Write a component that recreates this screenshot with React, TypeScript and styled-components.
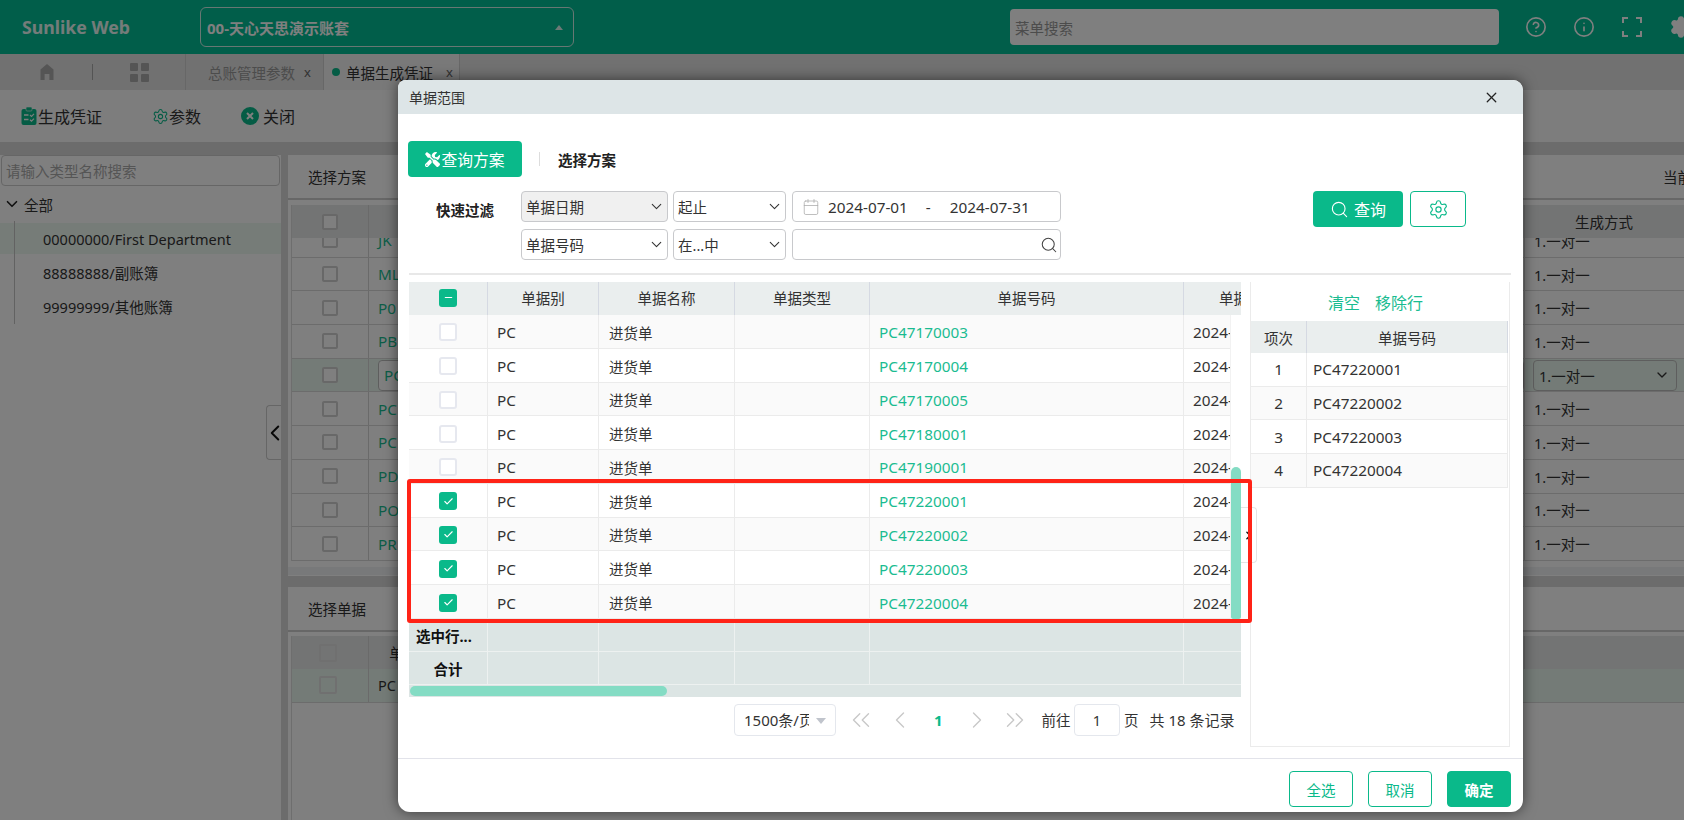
import React from "react";
import styled, { createGlobalStyle } from "styled-components";
import { ChevronDown, ChevronLeft, ChevronRight, ChevronsLeft, ChevronsRight, Search, Settings, X, CircleHelp, Info, Calendar, Check, Minus } from "lucide-react";
import { FaTools } from "react-icons/fa";

const FONT = `"Noto Sans", "Noto Sans CJK SC", sans-serif`;
const ACCENT = "#0ab98a";
const LINK = "#1abc91";

const Global = createGlobalStyle`
  html, body { margin: 0; padding: 0; background: #fff; overflow: hidden; }
  * { box-sizing: border-box; }
  body { font-family: ${FONT}; font-size: 14.5px; color: #333; }
`;

const Stage = styled.div`position: relative; width: 1684px; height: 820px; overflow: hidden;`;
const Page = styled.div`display: flex; flex-direction: column; width: 100%; height: 100%; background: #fff;`;

const TopBar = styled.header`display: flex; align-items: center; height: 54px; background: #02bd95; color: #fff; flex: none; overflow: hidden;`;
const Logo = styled.div`font-weight: 700; font-size: 17.7px; margin-left: 22px; width: 178px; flex: none; color: #e9f8f4;`;
const AccountSelect = styled.div`
  display: flex; align-items: center; justify-content: space-between; width: 374px; flex: none; height: 40px;
  border: 1px solid #cfeee6; border-radius: 6px; padding: 0 10px 0 6px; font-weight: 700; font-size: 15px;
`;
const Caret = styled.span`width: 0; height: 0; border-left: 4px solid transparent; border-right: 4px solid transparent; border-bottom: 5px solid #d9f2ec;`;
const MenuSearch = styled.div`
  margin-left: 436px; width: 489px; flex: none; height: 36px; background: #fff; border-radius: 4px; color: #999; display: flex; align-items: center; padding-left: 5px; font-size: 14.5px;
`;
const HeadIcons = styled.div`display: flex; align-items: center; margin-left: 26px; gap: 26px; color: #fff; flex: none;`;

const TabBar = styled.nav`display: flex; height: 36px; background: #e2e2e2; flex: none; align-items: stretch;`;
const HomeCell = styled.div`width: 92px; display: flex; align-items: center; justify-content: center; color: #aaa; padding-left: 2px;`;
const VRuleCell = styled.div`width: 1px; height: 16px; align-self: center; background: #a8a8a8;`;
const GridCell = styled.div`width: 92px; display: flex; align-items: center; justify-content: center; color: #aaa;`;
const Tab = styled.div<{ $w: number; $active?: boolean }>`
  width: ${(p) => p.$w}px; display: flex; align-items: center; gap: ${(p) => (p.$active ? "8px" : "4px")}; padding-left: ${(p) => (p.$active ? "6px" : "22px")};
  border-left: 1px solid #cfcfcf; border-right: ${(p) => (p.$active ? "1px solid #cfcfcf" : "0")};
  background: ${(p) => (p.$active ? "#f3f3f3" : "#e2e2e2")}; color: ${(p) => (p.$active ? "#333" : "#999")}; font-size: 14.5px;
`;
const TabDot = styled.span`width: 8px; height: 8px; border-radius: 50%; background: ${ACCENT}; margin-left: 2px; margin-right: -2px;`;
const TabClose = styled.span`font-size: 13px; color: #666; margin-left: 5px;`;

const Toolbar = styled.div`display: flex; align-items: center; height: 52px; background: #fafafa; flex: none; padding-left: 21px; font-size: 16px; color: #333;`;
const ToolBtn = styled.div<{ $ml?: number; $gap?: number }>`display: flex; align-items: center; gap: ${(p) => p.$gap ?? 1}px; margin-left: ${(p) => p.$ml ?? 0}px;`;
const Gap = styled.div`height: 13px; background: #d8d8d8; flex: none;`;

const Main = styled.main`flex: 1; display: flex; min-height: 0; background: #fff;`;
const LeftPane = styled.aside`width: 281px; flex: none; padding: 0 0 0 1px; position: relative;`;
const TreeSearch = styled.div`
  height: 31px; width: 279px; border: 1px solid #ccc; border-radius: 4px; color: #aaa; display: flex; align-items: center; padding-left: 4px; font-size: 14.5px;
`;
const TreeRoot = styled.div`display: flex; align-items: center; height: 36px; padding-left: 2px; gap: 3px; color: #333;`;
const TreeList = styled.div`margin: 1px 0 0 -1px;`;
const TreeItem = styled.div<{ $sel?: boolean }>`
  height: 31px; margin-bottom: 3px; display: flex; align-items: center; padding-left: 43px; position: relative;
  background: ${(p) => (p.$sel ? "#edf8f0" : "transparent")};
  &::before { content: ""; position: absolute; left: 14px; top: -2px; bottom: -2px; width: 1px; background: #c4c4c4; }
`;
const Collapse = styled.div`
  position: absolute; right: 0; top: 250px; width: 15px; height: 55px; border: 1px solid #ccc; border-right: 0; border-radius: 4px 0 0 4px; background: #fff;
  display: flex; align-items: center; justify-content: center; color: #111;
  svg { flex: none; margin-left: 1px; }
`;
const Splitter = styled.div`width: 7px; flex: none; background: #d8d8d8;`;
const RightPane = styled.section`flex: 1; min-width: 0; display: flex; flex-direction: column;`;
const Upper = styled.div`height: 421px; flex: none; display: flex; flex-direction: column; overflow: hidden; background: #fff;`;
const PaneHead = styled.div`height: 45px; flex: none; border-bottom: 2px solid #cfcfcf; display: flex; align-items: center; justify-content: space-between; padding-left: 20px; color: #333; white-space: nowrap; overflow: hidden;`;
const PaneHeadRight = styled.span`width: 21px; overflow: hidden; flex: none;`;
const BgTable = styled.div`margin: 5px 0 0 3px; flex: none; border-left: 1px solid #dcdcdc;`;
const BgScroll = styled.div`height: 323px; overflow: hidden;`;
const BgOffset = styled.div`margin-top: -14px;`;
const BgRow = styled.div<{ $head?: boolean; $sel?: boolean }>`
  display: grid; grid-template-columns: 77px 1156px 158px 1fr; height: ${(p) => (p.$head ? "33px" : "33.7px")};
  background: ${(p) => (p.$head ? "#e7e8e8" : p.$sel ? "#e9f7ee" : "#fff")};
  border-bottom: ${(p) => (p.$head ? "0" : "1px solid #d9d9d9")}; align-items: center;
`;
const BgCell = styled.div<{ $center?: boolean; $line?: boolean; $link?: boolean }>`
  display: flex; align-items: center; height: 100%; padding-left: ${(p) => (p.$center ? "0" : "9px")};
  justify-content: ${(p) => (p.$center ? "center" : "flex-start")};
  border-right: ${(p) => (p.$line ? "1px solid #d4d4d4" : "0")};
  color: ${(p) => (p.$link ? LINK : "#333")}; white-space: nowrap; overflow: hidden; font-size: ${(p) => (p.$link ? "15.3px" : "14.5px")};
`;
const BgCheck = styled.span<{ $soft?: boolean }>`
  width: ${(p) => (p.$soft ? 18 : 16)}px; height: ${(p) => (p.$soft ? 18 : 16)}px; border-radius: 2px; border: 2px solid ${(p) => (p.$soft ? "#e0e0e0" : "#d0d0d0")}; background: ${(p) => (p.$soft ? "transparent" : "#fff")};
  margin-right: ${(p) => (p.$soft ? 5 : 0)}px;
`;
const BgSelect = styled.div`
  width: 144px; height: 31px; border: 1px solid #bdbdbd; border-radius: 4px; display: flex; align-items: center; justify-content: space-between; padding: 0 6px 0 5px; margin-left: -1px; color: #333;
`;
const BgInput = styled.div`width: 100%; height: 31px; border: 1px solid #bdbdbd; border-radius: 4px; display: flex; align-items: center; padding-left: 5px; color: ${LINK}; background: #fff;`;
const BgHScroll = styled.div`height: 8px; margin-top: 6px; background: #f0f2f4;`;
const SplitterH = styled.div`height: 11px; background: #d8d8d8; flex: none;`;
const Lower = styled.div`flex: 1; display: flex; flex-direction: column; min-height: 0;`;
const LowerBody = styled.div`flex: 1; margin: 4px 0 0 3px; border-left: 1px solid #dcdcdc;`;

const Overlay = styled.div`position: absolute; inset: 0; background: rgba(0, 0, 0, 0.5);`;

const Modal = styled.div`
  position: absolute; left: 398px; top: 80px; width: 1125px; height: 732px; background: #fff; border-radius: 8px 10px 12px 12px;
  box-shadow: 0 0 14px rgba(0, 0, 0, 0.55); display: flex; flex-direction: column; overflow: hidden; font-family: ${FONT};
`;
const ModalTitle = styled.div`height: 34px; flex: none; background: #dde5e7; display: flex; align-items: center; justify-content: space-between; padding: 0 23px 0 11px; font-size: 14px; color: #333;`;
const ModalBody = styled.div`flex: 1; min-height: 0; display: flex; flex-direction: column; padding: 27px 12px 0 11px;`;
const PlanRow = styled.div`display: flex; align-items: center; height: 36px; flex: none; margin-left: -1px;`;
const PlanBtn = styled.div`width: 114px; height: 36px; border-radius: 4px; background: ${ACCENT}; color: #fff; display: flex; align-items: center; justify-content: center; font-size: 15.8px; gap: 1px;`;
const PlanDivider = styled.span`width: 1px; height: 14px; background: #ddd; margin: 0 17px;`;
const PlanLabel = styled.span`font-weight: 700; font-size: 14.5px; color: #222; margin-left: 1px;`;
const FilterRow = styled.div`display: grid; grid-template-columns: 112px 147px 5px 113px 6px 269px 252px 90px 7px 56px; margin-top: 14px; height: 69px; flex: none;`;
const FilterLabel = styled.div`grid-column: 1; grid-row: 1 / span 2; font-weight: 700; font-size: 14.5px; color: #222; padding: 8px 0 0 27px; white-space: nowrap;`;
const FieldStack = styled.div<{ $col: number }>`
  grid-column: ${(p) => p.$col}; grid-row: 1 / span 2; display: flex; flex-direction: column; gap: 7px;
`;
const Field = styled.div<{ $gray?: boolean }>`
  height: 31px; border: 1px solid #c8c9cc; border-radius: 4px; background: ${(p) => (p.$gray ? "#f0f0f0" : "#fff")};
  display: flex; align-items: center; justify-content: space-between; padding: 0 2px 0 4px; color: #333; font-size: 14.5px; white-space: nowrap;
`;
const DateValue = styled.span`flex: 1; display: flex; align-items: center; padding-left: 5px; gap: 8px; color: #333; font-size: 15.3px;`;
const Dash = styled.span`margin: 0 19px 0 18px;`;
const QueryBtn = styled.div`grid-column: 8; grid-row: 1 / span 2; height: 36px; border-radius: 4px; background: ${ACCENT}; color: #fff; display: flex; align-items: center; justify-content: center; gap: 5px; font-size: 16px;`;
const GearBtn = styled.div`grid-column: 10; grid-row: 1 / span 2; height: 36px; border-radius: 4px; border: 1px solid ${ACCENT}; color: ${ACCENT}; display: flex; align-items: center; justify-content: center;`;
const Rule = styled.div`height: 2px; background: #e8e8e8; margin-top: 13px; flex: none;`;

const COLS = "79px 111px 136px 135px 314px";
const Split = styled.div`display: grid; grid-template-columns: 832px 260px; column-gap: 9px; margin-top: 7px; height: 465px; flex: none;`;
const TableWrap = styled.div`display: flex; flex-direction: column; min-width: 0;`;
const GridShell = styled.div`position: relative; width: 832px; overflow: hidden;`;
const RowGrid = styled.div<{ $bg: string; $h: number; $line?: string }>`
  display: grid; grid-template-columns: ${COLS} 57px; height: ${(p) => p.$h}px; background: ${(p) => p.$bg}; width: 821px; overflow: hidden;
  border-bottom: 1.5px solid ${(p) => p.$line ?? "#ebebeb"};
`;
const HeadGrid = styled(RowGrid)`width: 832px; border-bottom: 0; grid-template-columns: ${COLS} 1fr;`;
const FootGrid = styled(RowGrid)`width: 832px; grid-template-columns: ${COLS} 1fr;`;
const Td = styled.div<{ $pad?: number; $center?: boolean; $link?: boolean; $head?: boolean; $bold?: boolean; $line?: string; $latin?: boolean; $last?: boolean }>`
  display: flex; align-items: center; height: 100%; white-space: nowrap; overflow: hidden; font-size: ${(p) => (p.$latin ? "15.3px" : "14.5px")};
  justify-content: ${(p) => (p.$center ? "center" : "flex-start")}; padding-left: ${(p) => p.$pad ?? 0}px;
  padding-top: ${(p) => (p.$head ? 0 : 2)}px; padding-bottom: ${(p) => (p.$head ? 2 : 0)}px;
  color: ${(p) => (p.$link ? LINK : p.$bold ? "#111" : "#333")}; font-weight: ${(p) => (p.$bold ? 700 : 400)};
  border-right: ${(p) => (p.$last ? "0" : p.$head ? "1.5px solid #d5d9e2" : `1.5px solid ${p.$line ?? "#ebebeb"}`)};
`;
const Box = styled.span<{ $on?: boolean }>`
  width: 18px; height: 18px; border-radius: 3px; flex: none; display: flex; align-items: center; justify-content: center; color: #fff;
  background: ${(p) => (p.$on ? ACCENT : "#fff")}; border: ${(p) => (p.$on ? "0" : "2px solid #e6e8ef")};
`;
const VTrack = styled.div`position: absolute; right: 0; top: 33px; bottom: 66px; width: 11px; background: #fff; border-left: 1px solid #f2f2f2;`;
const VThumb = styled.div`position: absolute; left: 0; right: 0; top: 152px; bottom: 0; background: #84dcc4; border-radius: 5px 5px 2px 2px;`;
const HTrack = styled.div`height: 12px; padding-top: 1px; background: #dce5e4; width: 832px; position: relative; flex: none; display: flex;`;
const HThumb = styled.div`width: 257px; height: 10px; margin: 0 0 0 1px; background: #84dcc4; border-radius: 5px;`;
const FootBand = styled.div`background: #dce5e4; width: 832px;`;
const Pager = styled.div`display: flex; align-items: center; height: 32px; margin: 7px 0 0 325px; font-size: 14.5px; color: #333;`;
const PageSize = styled.div`width: 102px; height: 32px; flex: none; border: 1px solid #e4e7ed; border-radius: 4px; display: flex; align-items: center; padding-left: 9px; overflow: hidden; white-space: nowrap; position: relative; font-size: 15px;`;
const SizeCaret = styled.span`position: absolute; right: 9px; top: 13px; width: 0; height: 0; border-left: 5.5px solid transparent; border-right: 5.5px solid transparent; border-top: 6px solid #c0c4cc;`;
const SizeText = styled.span`width: 65px; overflow: hidden; display: block; flex: none;`;
const PagerCells = styled.div`display: grid; grid-template-columns: repeat(5, 38.5px); margin-left: 6px; flex: none;`;
const PagerIcon = styled.span`color: #c8c8c8; display: flex; align-items: center; justify-content: center; height: 32px; svg { flex: none; }`;
const PageNum = styled.span`color: ${ACCENT}; font-weight: 700; text-align: center; line-height: 32px; font-size: 15px;`;
const PagerText = styled.span<{ $ml: number; $size?: number }>`margin-left: ${(p) => p.$ml}px; white-space: nowrap; flex: none; font-size: ${(p) => p.$size ?? 14.5}px;`;
const PageInput = styled.div`width: 46px; height: 32px; flex: none; border: 1px solid #e4e7ed; border-radius: 4px; display: flex; align-items: center; justify-content: center; margin-left: 3.5px;`;

const SidePanel = styled.div`border: 1px solid #ebebeb; border-top: 0; display: flex; flex-direction: column; position: relative; margin-left: 0;`;
const SideActions = styled.div`height: 39px; flex: none; display: flex; align-items: center; justify-content: center; gap: 15px; color: ${LINK}; font-size: 16px; padding-right: 9px;`;
const SideRow = styled.div<{ $bg: string; $head?: boolean }>`
  display: grid; grid-template-columns: 56px 1fr; height: ${(p) => (p.$head ? "32px" : "33.7px")}; background: ${(p) => p.$bg};
  border-bottom: ${(p) => (p.$head ? "0" : "1.5px solid #ebebeb")}; width: 257px;
`;
const SideCell = styled.div<{ $center?: boolean; $head?: boolean; $latin?: boolean }>`
  display: flex; align-items: center; justify-content: ${(p) => (p.$center ? "center" : "flex-start")}; padding-left: ${(p) => (p.$center ? 0 : 6)}px;
  border-right: ${(p) => (p.$head ? "1.5px solid #d5d9e2" : "1.5px solid #ebebeb")}; color: #333; font-size: ${(p) => (p.$latin ? "15.3px" : "14.5px")};
`;
const ModalFoot = styled.div`height: 54px; flex: none; border-top: 1.5px solid #e2e3ea; margin-top: 11px; display: flex; justify-content: flex-end; align-items: flex-start; padding: 12px 12px 0 0; gap: 15px;`;
const FootBtn = styled.div<{ $solid?: boolean }>`
  width: 64px; height: 36px; border-radius: 4px; display: flex; align-items: center; justify-content: center; font-size: 14.5px;
  border: 1px solid ${ACCENT}; background: ${(p) => (p.$solid ? ACCENT : "#fff")}; color: ${(p) => (p.$solid ? "#fff" : ACCENT)}; font-weight: ${(p) => (p.$solid ? 700 : 400)};
`;
const RedMark = styled.div`position: absolute; left: 407px; top: 479px; width: 845px; height: 144px; border: 4px solid #ff2317; border-radius: 3px;`;
const HandleFloat = styled.div`position: absolute; left: 1241px; top: 507px; width: 16px; height: 56px; border: 1px solid #e4e4e4; border-left: 0; border-radius: 0 4px 4px 0; background: #fff; display: flex; align-items: center; justify-content: center; color: #111;`;

const HomeIcon = () => (
  <svg width="18" height="18" viewBox="0 0 18 18" fill="currentColor"><path d="M9 1 15.5 6.6V17H11.4V11H6.6V17H2.5V6.6Z" /></svg>
);
const GridIcon = () => (
  <svg width="19" height="19" viewBox="0 0 19 19" fill="currentColor"><rect x="0" y="0" width="8" height="8" rx="1" /><rect x="11" y="0" width="8" height="8" rx="1" /><rect x="0" y="11" width="8" height="8" rx="1" /><rect x="11" y="11" width="8" height="8" rx="1" /></svg>
);
const FullIcon = ({ size = 22 }: { size?: number }) => (
  <svg width={size} height={size} viewBox="0 0 22 22" fill="none" stroke="currentColor" strokeWidth="2"><path d="M2 7V2H7M15 2H20V7M2 15V20H7M15 20H20V15" /></svg>
);
const VoucherIcon = () => (
  <svg width="16" height="18" viewBox="0 0 16 18">
    <rect x="0.5" y="2" width="15" height="16" rx="2" fill={ACCENT} />
    <rect x="5" y="0" width="6" height="4" rx="1" fill={ACCENT} stroke="#fafafa" strokeWidth=".6" />
    <path d="M3 8h4.5M3 12.5h4.5" stroke="#fafafa" strokeWidth="1.3" />
    <path d="M9 8l1.5 1.4L13 6.8M9 12.8l1.5 1.4L13 11.6" fill="none" stroke="#fafafa" strokeWidth="1.2" />
  </svg>
);
const CloseCircle = () => (
  <svg width="18" height="18" viewBox="0 0 18 18"><circle cx="9" cy="9" r="9" fill={ACCENT} /><path d="M6 6l6 6M12 6l-6 6" stroke="#fff" strokeWidth="2" /></svg>
);

const upperRows = ["JK", "ML", "P0", "PB", "PC", "PC", "PC", "PD", "PO", "PR"];
const docRows = ["PC47170003", "PC47170004", "PC47170005", "PC47180001", "PC47190001", "PC47220001", "PC47220002", "PC47220003", "PC47220004"];
const picked = ["PC47220001", "PC47220002", "PC47220003", "PC47220004"];
const FOOT_LINE = "#edf1f0";

export default function App() {
  return (
    <Stage>
      <Global />
      <Page>
        <TopBar>
          <Logo>Sunlike Web</Logo>
          <AccountSelect>00-天心天思演示账套<Caret /></AccountSelect>
          <MenuSearch>菜单搜索</MenuSearch>
          <HeadIcons>
            <CircleHelp size={22} strokeWidth={1.8} />
            <Info size={22} strokeWidth={1.8} />
            <FullIcon />
            <Settings size={24} fill="#fff" strokeWidth={1.5} />
          </HeadIcons>
        </TopBar>
        <TabBar>
          <HomeCell><HomeIcon /></HomeCell>
          <VRuleCell />
          <GridCell><GridIcon /></GridCell>
          <Tab $w={138}>总账管理参数<TabClose>x</TabClose></Tab>
          <Tab $w={137} $active><TabDot />单据生成凭证<TabClose>x</TabClose></Tab>
        </TabBar>
        <Toolbar>
          <ToolBtn $gap={1}><VoucherIcon />生成凭证</ToolBtn>
          <ToolBtn $ml={50} $gap={0}><Settings size={17} color={ACCENT} strokeWidth={1.5} />参数</ToolBtn>
          <ToolBtn $ml={40} $gap={4}><CloseCircle />关闭</ToolBtn>
        </Toolbar>
        <Gap />
        <Main>
          <LeftPane>
            <TreeSearch>请输入类型名称搜索</TreeSearch>
            <TreeRoot><ChevronDown size={18} strokeWidth={2.2} color="#222" />全部</TreeRoot>
            <TreeList>
              <TreeItem $sel>00000000/First Department</TreeItem>
              <TreeItem>88888888/副账簿</TreeItem>
              <TreeItem>99999999/其他账簿</TreeItem>
            </TreeList>
            <Collapse><ChevronLeft size={26} strokeWidth={1.8} /></Collapse>
          </LeftPane>
          <Splitter />
          <RightPane>
            <Upper>
              <PaneHead>选择方案<PaneHeadRight>当前</PaneHeadRight></PaneHead>
              <BgTable>
                <BgRow $head>
                  <BgCell $center $line><BgCheck /></BgCell>
                  <BgCell $line />
                  <BgCell $center>生成方式</BgCell>
                  <BgCell />
                </BgRow>
                <BgScroll>
                  <BgOffset>
                    {upperRows.map((code, i) => (
                      <BgRow key={i} $sel={i === 4}>
                        <BgCell $center $line><BgCheck /></BgCell>
                        <BgCell $line $link>{i === 4 ? <BgInput>{code}</BgInput> : code}</BgCell>
                        <BgCell>{i === 4 ? <BgSelect>1.一对一<ChevronDown size={16} /></BgSelect> : "1.一对一"}</BgCell>
                        <BgCell />
                      </BgRow>
                    ))}
                  </BgOffset>
                </BgScroll>
              </BgTable>
              <BgHScroll />
            </Upper>
            <SplitterH />
            <Lower>
              <PaneHead>选择单据</PaneHead>
              <LowerBody>
                <BgRow $head>
                  <BgCell $center $line><BgCheck $soft /></BgCell>
                  <BgCell $line><span>&nbsp;&nbsp;&nbsp;单据别</span></BgCell>
                  <BgCell />
                  <BgCell />
                </BgRow>
                <BgRow $sel>
                  <BgCell $center $line><BgCheck $soft /></BgCell>
                  <BgCell>PC</BgCell>
                  <BgCell />
                  <BgCell />
                </BgRow>
              </LowerBody>
            </Lower>
          </RightPane>
        </Main>
      </Page>

      <Overlay />

      <Modal>
        <ModalTitle>单据范围<X size={17} strokeWidth={1.8} color="#222" /></ModalTitle>
        <ModalBody>
          <PlanRow>
            <PlanBtn><FaTools size={15} />查询方案</PlanBtn>
            <PlanDivider />
            <PlanLabel>选择方案</PlanLabel>
          </PlanRow>
          <FilterRow>
            <FilterLabel>快速过滤</FilterLabel>
            <FieldStack $col={2}>
              <Field $gray>单据日期<ChevronDown size={17} strokeWidth={1.5} /></Field>
              <Field>单据号码<ChevronDown size={17} strokeWidth={1.5} /></Field>
            </FieldStack>
            <FieldStack $col={4}>
              <Field>起止<ChevronDown size={17} strokeWidth={1.5} /></Field>
              <Field>在...中<ChevronDown size={17} strokeWidth={1.5} /></Field>
            </FieldStack>
            <FieldStack $col={6}>
              <Field>
                <DateValue><Calendar size={18} strokeWidth={1} color="#aaa" /><span>2024-07-01<Dash>-</Dash>2024-07-31</span></DateValue>
              </Field>
              <Field><span /><Search size={18} strokeWidth={1.4} color="#444" /></Field>
            </FieldStack>
            <QueryBtn><Search size={19} strokeWidth={1.4} />查询</QueryBtn>
            <GearBtn><Settings size={21} strokeWidth={1.3} /></GearBtn>
          </FilterRow>
          <Rule />
          <Split>
            <TableWrap>
              <GridShell>
                <HeadGrid $bg="#eaeeee" $h={33}>
                  <Td $center $head><Box $on><Minus size={11} strokeWidth={2.5} /></Box></Td>
                  <Td $center $head>单据别</Td>
                  <Td $center $head>单据名称</Td>
                  <Td $center $head>单据类型</Td>
                  <Td $center $head>单据号码</Td>
                  <Td $pad={35} $head $last>单据日期</Td>
                </HeadGrid>
                {docRows.map((no, i) => (
                  <RowGrid key={no} $bg={i % 2 === 0 ? "#fafafa" : "#fff"} $h={33.78}>
                    <Td $center><Box $on={i >= 5}>{i >= 5 && <Check size={11} strokeWidth={2.5} />}</Box></Td>
                    <Td $pad={9} $latin>PC</Td>
                    <Td $pad={10}>进货单</Td>
                    <Td />
                    <Td $pad={9} $link $latin>{no}</Td>
                    <Td $pad={9} $latin>2024-07-01</Td>
                  </RowGrid>
                ))}
                <FootBand>
                  <FootGrid $bg="#dce5e4" $h={33} $line={FOOT_LINE}>
                    <Td $pad={7} $bold $line={FOOT_LINE}>选中行...</Td>
                    <Td $line={FOOT_LINE} /><Td $line={FOOT_LINE} /><Td $line={FOOT_LINE} /><Td $line={FOOT_LINE} /><Td $last />
                  </FootGrid>
                  <FootGrid $bg="#dce5e4" $h={33} $line={FOOT_LINE}>
                    <Td $center $bold $line={FOOT_LINE}>合计</Td>
                    <Td $line={FOOT_LINE} /><Td $line={FOOT_LINE} /><Td $line={FOOT_LINE} /><Td $line={FOOT_LINE} /><Td $last />
                  </FootGrid>
                </FootBand>
                <VTrack><VThumb /></VTrack>
              </GridShell>
              <HTrack><HThumb /></HTrack>
              <Pager>
                <PageSize><SizeText>1500条/页</SizeText><SizeCaret /></PageSize>
                <PagerCells>
                  <PagerIcon><ChevronsLeft size={30} strokeWidth={1.1} /></PagerIcon>
                  <PagerIcon><ChevronLeft size={28} strokeWidth={1.2} /></PagerIcon>
                  <PageNum>1</PageNum>
                  <PagerIcon><ChevronRight size={28} strokeWidth={1.2} /></PagerIcon>
                  <PagerIcon><ChevronsRight size={30} strokeWidth={1.1} /></PagerIcon>
                </PagerCells>
                <PagerText $ml={7}>前往</PagerText>
                <PageInput>1</PageInput>
                <PagerText $ml={4}>页</PagerText>
                <PagerText $ml={11} $size={15}>共 18 条记录</PagerText>
              </Pager>
            </TableWrap>
            <SidePanel>
              <SideActions><span>清空</span><span>移除行</span></SideActions>
              <SideRow $bg="#eaeeee" $head>
                <SideCell $center $head>项次</SideCell>
                <SideCell $center $head>单据号码</SideCell>
              </SideRow>
              {picked.map((no, i) => (
                <SideRow key={no} $bg={i % 2 === 0 ? "#fff" : "#fafafa"}>
                  <SideCell $center $latin>{i + 1}</SideCell>
                  <SideCell $latin>{no}</SideCell>
                </SideRow>
              ))}
            </SidePanel>
          </Split>
        </ModalBody>
        <ModalFoot>
          <FootBtn>全选</FootBtn>
          <FootBtn>取消</FootBtn>
          <FootBtn $solid>确定</FootBtn>
        </ModalFoot>
      </Modal>

      <HandleFloat><ChevronRight size={13} strokeWidth={2.5} /></HandleFloat>
      <RedMark />
    </Stage>
  );
}
